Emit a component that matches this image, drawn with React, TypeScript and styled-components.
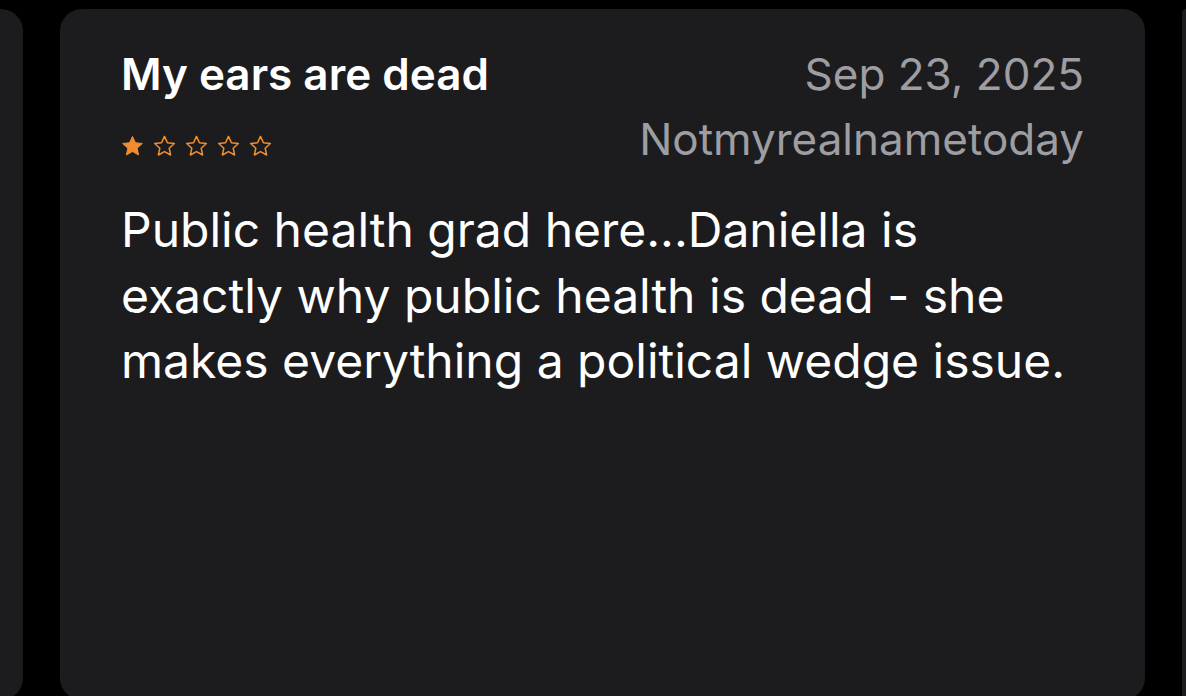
import React from "react";
import styled, { createGlobalStyle } from "styled-components";

const GlobalStyle = createGlobalStyle`
  html, body {
    margin: 0;
    padding: 0;
    background: #000000;
    overflow: hidden;
  }
  body {
    font-family: Inter, "Liberation Sans", sans-serif;
    -webkit-font-smoothing: antialiased;
  }
`;

const Track = styled.div`
  display: grid;
  grid-template-columns: 23px 1085px 1fr;
  column-gap: 37px;
  padding-top: 9px;
  width: 1186px;
  height: 696px;
  box-sizing: border-box;
`;

const Peek = styled.div<{ $side: "left" | "right" }>`
  background: #1c1c1e;
  height: 691px;
  border-radius: ${(p) => (p.$side === "left" ? "0 22px 22px 0" : "22px 0 0 22px")};
`;

const Card = styled.div`
  background: #1c1c1e;
  height: 691px;
  border-radius: 22px;
  padding: 39px 61px 0 61px;
  box-sizing: border-box;
`;

const Header = styled.div`
  display: grid;
  grid-template-columns: 1fr auto;
  row-gap: 13px;
  align-items: center;
`;

const Title = styled.div`
  color: #ffffff;
  font-size: 44px;
  font-weight: 600;
  line-height: 52px;
`;

const Meta = styled.div`
  color: #9d9da2;
  font-size: 44px;
  font-weight: 400;
  line-height: 52px;
  text-align: right;
`;

const Stars = styled.div`
  display: flex;
  gap: 9px;
  align-items: center;
  padding-top: 14px;
`;

const Body = styled.p`
  margin: 32px 0 0 0;
  color: #ffffff;
  font-size: 48px;
  line-height: 65.5px;
  font-weight: 400;
  max-width: 960px;
`;

function Star({ filled }: { filled: boolean }) {
  return (
    <svg width="23" height="22" viewBox="0 0 24 23">
      <path
        d="M12 1.5l3.1 6.6 7.2.8-5.4 4.9 1.5 7.1L12 17.3l-6.4 3.6 1.5-7.1-5.4-4.9 7.2-.8z"
        fill={filled ? "#f28c30" : "none"}
        stroke="#f28c30"
        strokeWidth={filled ? 1 : 1.6}
        strokeLinejoin="round"
      />
    </svg>
  );
}

export default function App() {
  const rating = 1;
  return (
    <>
      <GlobalStyle />
      <Track>
        <Peek $side="left" />
        <Card>
          <Header>
            <Title>My ears are dead</Title>
            <Meta>Sep 23, 2025</Meta>
            <Stars>
              {[0, 1, 2, 3, 4].map((i) => (
                <Star key={i} filled={i < rating} />
              ))}
            </Stars>
            <Meta>Notmyrealnametoday</Meta>
          </Header>
          <Body>
            Public health grad here...Daniella is exactly why public health is
            dead - she makes everything a political wedge issue.
          </Body>
        </Card>
        <Peek $side="right" />
      </Track>
    </>
  );
}
